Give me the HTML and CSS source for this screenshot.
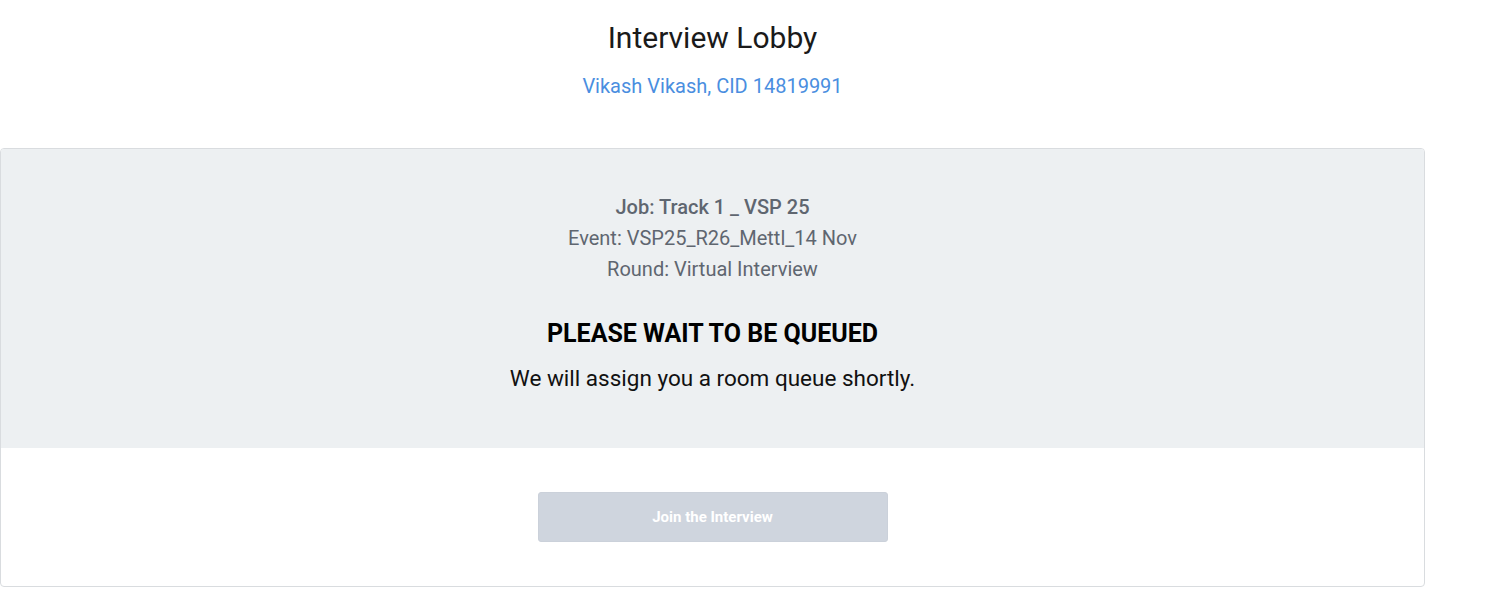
FILE: index.html
```html
<!DOCTYPE html>
<html>
<head>
<meta charset="utf-8">
<link rel="stylesheet" href="styles.css">
</head>
<body>
<div class="page">
  <header class="head">
    <h1 class="title">Interview Lobby</h1>
    <p class="candidate">Vikash Vikash, CID 14819991</p>
  </header>
  <section class="card">
    <div class="info">
      <p class="job">Job: Track 1 _ VSP 25</p>
      <p class="meta">Event: VSP25_R26_Mettl_14 Nov</p>
      <p class="meta">Round: Virtual Interview</p>
      <h2 class="status">PLEASE WAIT TO BE QUEUED</h2>
      <p class="note">We will assign you a room queue shortly.</p>
    </div>
    <div class="actions">
      <button class="join" disabled>Join the Interview</button>
    </div>
  </section>
</div>
</body>
</html>
```
FILE: styles.css
```css
* { box-sizing: border-box; }
html, body { margin: 0; padding: 0; background: #fff; }
body { font-family: Roboto, "Noto Sans", Arial, sans-serif; }
.page { width: 1425px; }
.head { text-align: center; padding-top: 20px; height: 148px; }
.title { margin: 0; font-size: 30px; font-weight: 400; color: #1a1a1a; line-height: 36px; }
.candidate { margin: 17px 0 0; font-size: 20px; color: #4a8ee0; line-height: 26px; }
.card { border: 1px solid #d9dcdf; border-radius: 4px; overflow: hidden; }
.info { background: #edf0f2; text-align: center; padding: 43px 0 55px; }
.job { margin: 0; font-size: 20px; font-weight: 500; color: #5f6670; line-height: 31px; }
.meta { margin: 0; font-size: 20px; color: #5f6670; line-height: 31px; }
.status { margin: 34px 0 0; font-size: 25px; font-weight: 700; color: #000; line-height: 30px; }
.note { margin: 14px 0 0; font-size: 22.5px; color: #111; line-height: 30px; }
.actions { display: flex; justify-content: center; padding: 44px 0 44px; }
.join { width: 350px; height: 50px; border: 1px solid #cbd1da; border-radius: 3px; background: #cfd5de; color: #fff; font-family: Roboto, Arial, sans-serif; font-weight: 700; font-size: 15px; }
```
